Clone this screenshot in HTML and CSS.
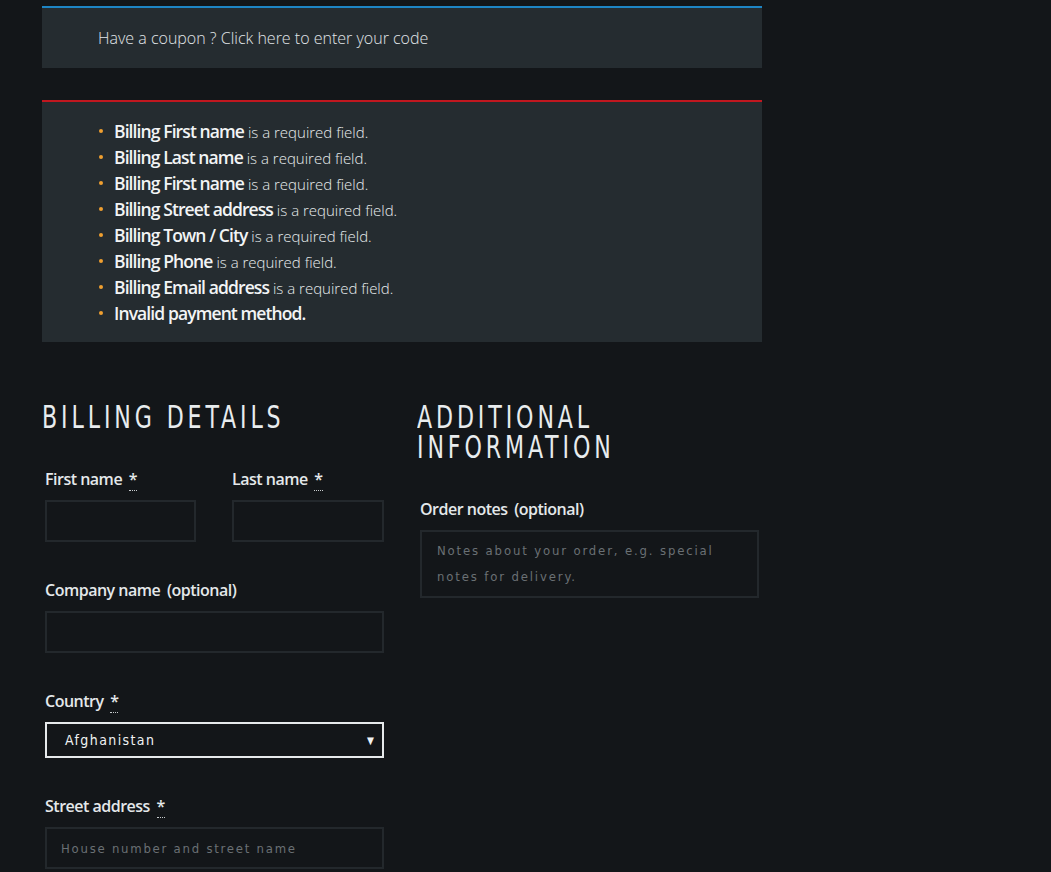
FILE: index.html
```html
<!DOCTYPE html>
<html>
<head>
<meta charset="utf-8">
<link rel="stylesheet" href="styles.css">
</head>
<body>
<div class="page">
  <div class="notice coupon">Have a coupon ? Click here to enter your code</div>
  <ul class="notice errors">
    <li><strong>Billing First name</strong> is a required field.</li>
    <li><strong>Billing Last name</strong> is a required field.</li>
    <li><strong>Billing First name</strong> is a required field.</li>
    <li><strong>Billing Street address</strong> is a required field.</li>
    <li><strong>Billing Town / City</strong> is a required field.</li>
    <li><strong>Billing Phone</strong> is a required field.</li>
    <li><strong>Billing Email address</strong> is a required field.</li>
    <li><strong>Invalid payment method.</strong></li>
  </ul>
  <div class="cols">
    <div class="col">
      <h3 class="heading"><span class="hl">Billing details</span></h3>
      <div class="row half">
        <div class="field">
          <label class="lbl">First name <abbr class="req">*</abbr></label>
          <div class="input"></div>
        </div>
        <div class="field">
          <label class="lbl">Last name <abbr class="req">*</abbr></label>
          <div class="input"></div>
        </div>
      </div>
      <div class="field">
        <label class="lbl">Company name <span class="opt">(optional)</span></label>
        <div class="input"></div>
      </div>
      <div class="field">
        <label class="lbl">Country <abbr class="req">*</abbr></label>
        <div class="select"><span>Afghanistan</span><span class="arrow">&#9660;</span></div>
      </div>
      <div class="field">
        <label class="lbl">Street address <abbr class="req">*</abbr></label>
        <div class="input ph">House number and street name</div>
      </div>
    </div>
    <div class="col">
      <h3 class="heading"><span class="hl">Additional</span><span class="hl">information</span></h3>
      <div class="field notes-field">
        <label class="lbl">Order notes <span class="opt">(optional)</span></label>
        <div class="textarea">Notes about your order, e.g. special notes for delivery.</div>
      </div>
    </div>
  </div>
</div>
</body>
</html>
```

FILE: styles.css
```css
html, body {
  margin: 0;
  background: #131619;
  height: 100%;
  overflow: hidden;
}
body {
  font-family: "Open Sans", "Noto Sans", sans-serif;
  color: #e4e8ea;
}
.page {
  width: 720px;
  margin-left: 42px;
  padding-top: 6px;
}
.notice {
  background: #252c30;
  margin: 0;
}
.coupon {
  border-top: 2px solid #1e85c4;
  height: 60px;
  box-sizing: content-box;
  padding-left: 56px;
  display: flex;
  align-items: center;
  font-size: 16px;
  font-weight: 300;
  color: #e1e6e9;
}
.errors {
  margin-top: 32px;
  border-top: 2px solid #c1171f;
  list-style: none;
  padding: 16px 0 16px 56px;
}
.errors li {
  line-height: 26px;
  height: 26px;
  font-size: 15px;
  font-weight: 300;
  color: #e8ecee;
  position: relative;
  padding-left: 16px;
}
.errors li::before {
  content: "";
  position: absolute;
  left: 1px;
  top: 11px;
  width: 4px;
  height: 4px;
  border-radius: 50%;
  background: #f0a030;
}
.errors strong {
  font-weight: 600;
  font-size: 17.5px;
  letter-spacing: -0.9px;
  color: #f2f4f5;
}
.cols {
  display: grid;
  grid-template-columns: 345px 345px;
  column-gap: 30px;
  margin-top: 60px;
}
.heading {
  margin: 0;
  display: flex;
  flex-direction: column;
  font-family: "DejaVu Sans Condensed", "DejaVu Sans", sans-serif;
  font-stretch: condensed;
  font-weight: 400;
  font-size: 31.5px;
  letter-spacing: 5px;
  text-transform: uppercase;
  color: #e8ecee;
  transform: scaleX(0.78);
  transform-origin: left center;
  white-space: nowrap;
}
.hl {
  display: block;
  height: 30px;
  line-height: 30px;
  overflow: visible;
}
.col {
  display: flex;
  flex-direction: column;
}
.row.half {
  display: grid;
  grid-template-columns: 151px 152px;
  column-gap: 36px;
  padding-left: 3px;
}
.field {
  display: flex;
  flex-direction: column;
  margin-top: 36px;
  padding-left: 3px;
}
.row.half .field {
  padding-left: 0;
  margin-top: 35px;
}
.col > .field {
  width: 339px;
}
.lbl {
  font-size: 16px;
  font-weight: 600;
  letter-spacing: -0.5px;
  line-height: 24px;
  color: #e4e8ea;
  margin-bottom: 9px;
}
.opt {
  margin-left: 3px;
}
.req {
  text-decoration: none;
  border-bottom: 1px dotted #c8ccce;
  margin-left: 3px;
  font-weight: 600;
}
.input {
  height: 42px;
  box-sizing: border-box;
  border: 2px solid #23282c;
  background: #131619;
}
.ph, .textarea {
  font-family: "DejaVu Sans Condensed", "DejaVu Sans", sans-serif;
  font-stretch: condensed;
  font-size: 13px;
  color: #6a7074;
  padding-left: 14px;
}
.ph {
  letter-spacing: 1.76px;
  display: flex;
  align-items: center;
}
.select {
  height: 36px;
  box-sizing: border-box;
  border: 2px solid #e6e9eb;
  display: flex;
  align-items: center;
  justify-content: space-between;
  padding: 0 8px 0 18px;
  font-family: "DejaVu Sans Condensed", "DejaVu Sans", sans-serif;
  font-stretch: condensed;
  font-size: 14px;
  letter-spacing: 1.4px;
  color: #f0f2f3;
}
.arrow {
  font-size: 10px;
  letter-spacing: 0;
}
.notes-field {
  margin-top: 35px;
}
.textarea {
  height: 68px;
  box-sizing: border-box;
  border: 2px solid #23282c;
  padding: 6px 14px 6px 15px;
  line-height: 26px;
  letter-spacing: 1.85px;
}
```
